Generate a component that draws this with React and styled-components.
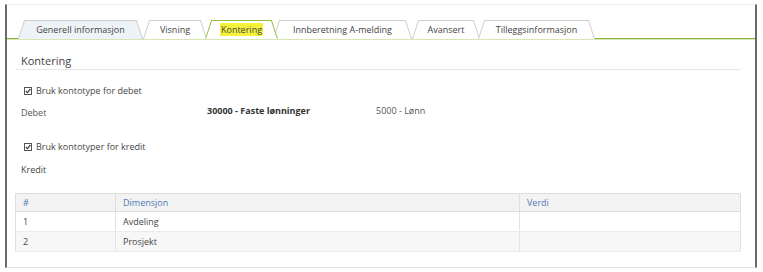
import React from "react";
import styled, { createGlobalStyle, css } from "styled-components";

const Global = createGlobalStyle`
  html, body { margin: 0; padding: 0; background: #fff; }
  body { font-family: "Open Sans", "Liberation Sans", sans-serif; color: #444; }
`;

const Frame = styled.div`
  box-sizing: border-box;
  margin: 4px 0 0 5px;
  width: 752px;
  height: 264px;
  border-top: 1px solid #ececec;
  border-bottom: 1px solid #e4e4e4;
  border-left: 2px solid #6a6a6a;
  border-right: 2px solid #6a6a6a;
`;

const TabBar = styled.div`
  display: flex;
  padding: 15px 0 0 11px;
  border-bottom: 1px solid #8db53c;
  box-shadow: 0 1px 0 #d6e6b4;
`;

const Tab = styled.div`
  position: relative;
  box-sizing: border-box;
  width: ${(p) => p.$w}px;
  margin-left: ${(p) => p.$ml || 0}px;
  height: 19px;
  display: flex;
  align-items: center;
  justify-content: center;
  font-size: 9px;
  color: #444;
  z-index: ${(p) => (p.$active ? 3 : 1)};
  margin-bottom: -1px;

  &::before,
  &::after {
    content: "";
    position: absolute;
    top: 0;
    bottom: 0;
    width: 60%;
    box-sizing: border-box;
    background: ${(p) => p.$bg || "#fff"};
    border-top: 1px solid ${(p) => (p.$active ? "#93bb3e" : "#cfcfcf")};
    transform-origin: bottom;
    z-index: -1;
  }
  &::before {
    left: 0;
    border-left: 1px solid ${(p) => (p.$active ? "#93bb3e" : "#cfcfcf")};
    transform: skewX(-18deg);
  }
  &::after {
    right: 0;
    border-right: 1px solid ${(p) => (p.$active ? "#93bb3e" : "#cfcfcf")};
    transform: skewX(18deg);
  }
  ${(p) =>
    p.$active &&
    css`
      &::before,
      &::after {
        border-bottom: 1px solid #fff;
      }
    `}
`;

const Mark = styled.span`
  background: #f4f23a;
  padding: 0 1px;
`;

const Content = styled.div`
  padding: 0 14px 0 8px;
`;

const Heading = styled.div`
  margin-top: 14px;
  padding-left: 6px;
  font-size: 11px;
  line-height: 16px;
  color: #444;
  border-bottom: 1px solid #e8e8e8;
`;

const CheckRow = styled.div`
  display: flex;
  align-items: center;
  gap: 4px;
  margin-top: ${(p) => p.$mt}px;
  padding-left: 9px;
  font-size: 9px;
  line-height: 14px;
  color: #444;
`;

const Label = styled.div`
  margin-top: ${(p) => p.$mt}px;
  padding-left: 6px;
  font-size: 9px;
  line-height: 14px;
  color: #444;
`;

const AccountRow = styled.div`
  display: grid;
  grid-template-columns: 186px 169px auto;
  margin-top: 6px;
  padding-left: 6px;
  font-size: 9px;
  line-height: 14px;
  color: #444;
`;

const Cell = styled.span`
  font-weight: ${(p) => (p.$bold ? 700 : 400)};
  color: ${(p) => (p.$bold ? "#333" : "#555")};
  ${(p) => p.$low && "padding-top: 2px;"}
`;

const Table = styled.table`
  margin-top: 16px;
  width: 726px;
  border-collapse: collapse;
  font-size: 9px;
  color: #444;
  border: 1px solid #dedede;
`;

const Th = styled.th`
  text-align: left;
  font-weight: 400;
  color: #4f7cb4;
  background: #f3f3f3;
  height: 17px;
  padding: 0 0 0 7px;
  border-right: 1px solid #dedede;
  border-bottom: 1px solid #dedede;
  width: ${(p) => p.$w}px;
`;

const Tr = styled.tr`
  background: ${(p) => (p.$alt ? "#f7f7f7" : "#fff")};
`;

const Td = styled.td`
  height: 19px;
  padding: 0 0 0 7px;
  color: #444;
  border-right: 1px solid #e2e2e2;
  border-bottom: 1px solid #ececec;
`;

function CheckIcon() {
  return (
    <svg width="8" height="8" viewBox="0 0 8 8">
      <rect x="0.5" y="0.5" width="7" height="7" fill="#fff" stroke="#555" />
      <path d="M1.8 4 L3.4 5.6 L6.4 2" fill="none" stroke="#444" strokeWidth="1.3" />
    </svg>
  );
}

const tabs = [
  { label: "Generell informasjon", w: 125, ml: 0, bg: "#eef3f7" },
  { label: "Visning", w: 64, ml: 0 },
  { label: "Kontering", w: 73, ml: -2, active: true },
  { label: "Innberetning A-melding", w: 139, ml: -5 },
  { label: "Avansert", w: 68, ml: 0 },
  { label: "Tilleggsinformasjon", w: 117, ml: -2 },
];

export default function App() {
  return (
    <>
      <Global />
      <Frame>
        <TabBar>
          {tabs.map((t) => (
            <Tab key={t.label} $w={t.w} $ml={t.ml} $bg={t.bg} $active={t.active}>
              {t.active ? <Mark>{t.label}</Mark> : t.label}
            </Tab>
          ))}
        </TabBar>
        <Content>
          <Heading>Kontering</Heading>
          <CheckRow $mt={14}>
            <CheckIcon />
            Bruk kontotype for debet
          </CheckRow>
          <AccountRow>
            <Cell $low>Debet</Cell>
            <Cell $bold>30000 - Faste lønninger</Cell>
            <Cell>5000 - Lønn</Cell>
          </AccountRow>
          <CheckRow $mt={20}>
            <CheckIcon />
            Bruk kontotyper for kredit
          </CheckRow>
          <Label $mt={9}>Kredit</Label>
          <Table>
            <thead>
              <tr>
                <Th $w={92}>#</Th>
                <Th $w={396}>Dimensjon</Th>
                <Th>Verdi</Th>
              </tr>
            </thead>
            <tbody>
              <Tr>
                <Td>1</Td>
                <Td>Avdeling</Td>
                <Td></Td>
              </Tr>
              <Tr $alt>
                <Td>2</Td>
                <Td>Prosjekt</Td>
                <Td></Td>
              </Tr>
            </tbody>
          </Table>
        </Content>
      </Frame>
    </>
  );
}
